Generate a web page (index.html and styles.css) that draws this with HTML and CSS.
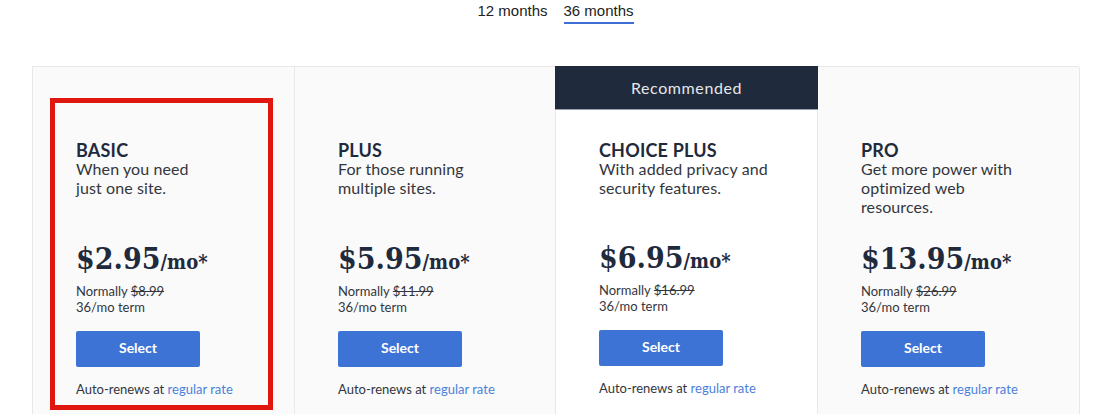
FILE: index.html
```html
<!DOCTYPE html>
<html>
<head>
<meta charset="utf-8">
<link rel="stylesheet" href="styles.css">
</head>
<body>
<div class="page">
  <div class="tabs">
    <span class="tab">12 months</span>
    <span class="tab active">36 months</span>
  </div>
  <div class="plans">
    <div class="card">
      <div class="highlight"></div>
      <div class="head">
        <div class="name">BASIC</div>
        <div class="desc">When you need<br>just one site.</div>
      </div>
      <div class="price"><span class="amt">$2.95</span><span class="per">/mo*</span></div>
      <div class="small">Normally <s>$8.99</s></div>
      <div class="small">36/mo term</div>
      <button class="select">Select</button>
      <div class="small renew">Auto-renews at <a href="#">regular rate</a></div>
    </div>
    <div class="card">
      <div class="head">
        <div class="name">PLUS</div>
        <div class="desc">For those running<br>multiple sites.</div>
      </div>
      <div class="price"><span class="amt">$5.95</span><span class="per">/mo*</span></div>
      <div class="small">Normally <s>$11.99</s></div>
      <div class="small">36/mo term</div>
      <button class="select">Select</button>
      <div class="small renew">Auto-renews at <a href="#">regular rate</a></div>
    </div>
    <div class="card featured">
      <div class="badge">Recommended</div>
      <div class="head">
        <div class="name">CHOICE PLUS</div>
        <div class="desc">With added privacy and<br>security features.</div>
      </div>
      <div class="price"><span class="amt">$6.95</span><span class="per">/mo*</span></div>
      <div class="small">Normally <s>$16.99</s></div>
      <div class="small">36/mo term</div>
      <button class="select">Select</button>
      <div class="small renew">Auto-renews at <a href="#">regular rate</a></div>
    </div>
    <div class="card">
      <div class="head">
        <div class="name">PRO</div>
        <div class="desc">Get more power with<br>optimized web<br>resources.</div>
      </div>
      <div class="price"><span class="amt">$13.95</span><span class="per">/mo*</span></div>
      <div class="small">Normally <s>$26.99</s></div>
      <div class="small">36/mo term</div>
      <button class="select">Select</button>
      <div class="small renew">Auto-renews at <a href="#">regular rate</a></div>
    </div>
  </div>
</div>
</body>
</html>
```

FILE: styles.css
```css
html, body {
  margin: 0;
  padding: 0;
  background: #ffffff;
  overflow: hidden;
}
.page {
  width: 1047px;
  margin-left: 32px;
}
.tabs {
  display: flex;
  justify-content: center;
  gap: 16px;
  padding-top: 2px;
  font-family: "Liberation Sans", Arial, sans-serif;
  font-size: 15px;
  line-height: 18px;
  color: #222;
}
.tab {
  padding-bottom: 2px;
  border-bottom: 2px solid transparent;
}
.tab.active {
  border-bottom-color: #3d6fd6;
}
.plans {
  margin-top: 42px;
  display: grid;
  grid-template-columns: 262px 261px 262px 262px;
  border-top: 1px solid #e8e8e8;
  border-left: 1px solid #e8e8e8;
  height: 360px;
  font-family: Lato, "Open Sans", sans-serif;
  color: #33363d;
}
.card {
  position: relative;
  background: #fafafa;
  border-right: 1px solid #e8e8e8;
  padding: 72px 0 0 43px;
}
.card.featured {
  background: #ffffff;
  margin-top: -1px;
  padding-top: 28px;
}
.badge {
  height: 44px;
  margin: -28px -1px 29px -44px;
  background: #1f2a3d;
  color: #e6e6e6;
  font-size: 16px;
  letter-spacing: 0.6px;
  line-height: 44px;
  text-align: center;
  border-bottom: 1px solid #9aa2ad;
  box-sizing: border-box;
}
.card.featured .head {
  height: 99px;
}
.head {
  height: 100px;
}
.name {
  font-weight: 700;
  font-size: 18px;
  line-height: 22px;
  color: #1f2a3d;
  letter-spacing: 0.2px;
}
.desc {
  margin-top: -2px;
  font-size: 16px;
  letter-spacing: 0.1px;
  line-height: 19px;
  color: #33363d;
}
.price {
  height: 40px;
  line-height: 40px;
  color: #1f2a3d;
  font-family: "DejaVu Serif Condensed", "DejaVu Serif", serif;
  font-weight: 700;
  margin-bottom: 4px;
  white-space: nowrap;
}
.amt {
  font-size: 30px;
}
.per {
  font-size: 20px;
}
.small {
  font-size: 13px;
  line-height: 16px;
  color: #33363d;
}
.small s {
  color: #33363d;
}
.select {
  display: block;
  margin-top: 16px;
  width: 124px;
  height: 36px;
  border: none;
  border-radius: 2px;
  background: #3e73d6;
  color: #ffffff;
  font-family: Lato, "Open Sans", sans-serif;
  font-weight: 700;
  font-size: 14px;
  line-height: 34px;
  padding: 0 0 2px;
}
.renew {
  margin-top: 14px;
}
.renew a {
  color: #4a80dc;
  text-decoration: none;
}
.highlight {
  position: absolute;
  left: 17px;
  top: 31px;
  width: 213px;
  height: 302px;
  border: 5px solid #e0170e;
}
```
